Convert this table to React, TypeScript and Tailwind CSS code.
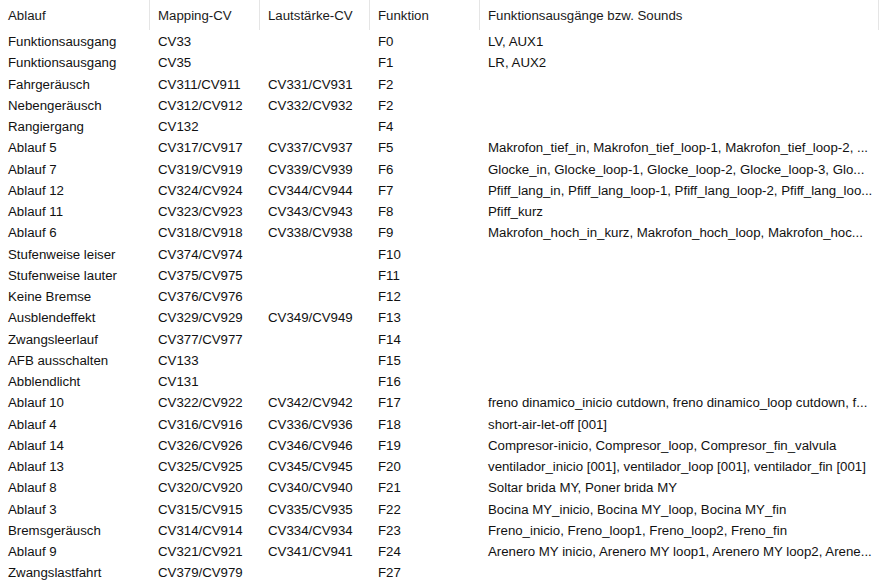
import React from "react";

const rows: [string, string, string, string, string][] = [
  ["Funktionsausgang", "CV33", "", "F0", "LV, AUX1"],
  ["Funktionsausgang", "CV35", "", "F1", "LR, AUX2"],
  ["Fahrgeräusch", "CV311/CV911", "CV331/CV931", "F2", ""],
  ["Nebengeräusch", "CV312/CV912", "CV332/CV932", "F2", ""],
  ["Rangiergang", "CV132", "", "F4", ""],
  ["Ablauf 5", "CV317/CV917", "CV337/CV937", "F5", "Makrofon_tief_in, Makrofon_tief_loop-1, Makrofon_tief_loop-2, ..."],
  ["Ablauf 7", "CV319/CV919", "CV339/CV939", "F6", "Glocke_in, Glocke_loop-1, Glocke_loop-2, Glocke_loop-3, Glo..."],
  ["Ablauf 12", "CV324/CV924", "CV344/CV944", "F7", "Pfiff_lang_in, Pfiff_lang_loop-1, Pfiff_lang_loop-2, Pfiff_lang_loo..."],
  ["Ablauf 11", "CV323/CV923", "CV343/CV943", "F8", "Pfiff_kurz"],
  ["Ablauf 6", "CV318/CV918", "CV338/CV938", "F9", "Makrofon_hoch_in_kurz, Makrofon_hoch_loop, Makrofon_hoc..."],
  ["Stufenweise leiser", "CV374/CV974", "", "F10", ""],
  ["Stufenweise lauter", "CV375/CV975", "", "F11", ""],
  ["Keine Bremse", "CV376/CV976", "", "F12", ""],
  ["Ausblendeffekt", "CV329/CV929", "CV349/CV949", "F13", ""],
  ["Zwangsleerlauf", "CV377/CV977", "", "F14", ""],
  ["AFB ausschalten", "CV133", "", "F15", ""],
  ["Abblendlicht", "CV131", "", "F16", ""],
  ["Ablauf 10", "CV322/CV922", "CV342/CV942", "F17", "freno dinamico_inicio cutdown, freno dinamico_loop cutdown, f..."],
  ["Ablauf 4", "CV316/CV916", "CV336/CV936", "F18", "short-air-let-off [001]"],
  ["Ablauf 14", "CV326/CV926", "CV346/CV946", "F19", "Compresor-inicio, Compresor_loop, Compresor_fin_valvula"],
  ["Ablauf 13", "CV325/CV925", "CV345/CV945", "F20", "ventilador_inicio [001], ventilador_loop [001], ventilador_fin [001]"],
  ["Ablauf 8", "CV320/CV920", "CV340/CV940", "F21", "Soltar brida MY, Poner brida MY"],
  ["Ablauf 3", "CV315/CV915", "CV335/CV935", "F22", "Bocina MY_inicio, Bocina MY_loop, Bocina MY_fin"],
  ["Bremsgeräusch", "CV314/CV914", "CV334/CV934", "F23", "Freno_inicio, Freno_loop1, Freno_loop2, Freno_fin"],
  ["Ablauf 9", "CV321/CV921", "CV341/CV941", "F24", "Arenero MY inicio, Arenero MY loop1, Arenero MY loop2, Arene..."],
  ["Zwangslastfahrt", "CV379/CV979", "", "F27", ""],
];

const widths = ["w-[150px]", "w-[110px]", "w-[110px]", "w-[110px]", "w-[399px]"];
const headers = ["Ablauf", "Mapping-CV", "Lautstärke-CV", "Funktion", "Funktionsausgänge bzw. Sounds"];

export default function App() {
  return (
    <div
      className="w-[887px] h-[585px] bg-white overflow-hidden text-[13.25px] text-[#111]"
      style={{ fontFamily: '"Liberation Sans", Arial, sans-serif' }}
    >
      <div className="flex h-[31.5px]">
        {headers.map((h, i) => (
          <div key={i} className={`${widths[i]} shrink-0 h-full flex items-center`}>
            <div className="flex-1 pl-2 whitespace-nowrap overflow-hidden text-[#1a1a1a]">{h}</div>
            <div className="w-px h-[30px] self-start bg-[#e5e5e5]" />
          </div>
        ))}
      </div>
      <div className="flex flex-col">
        {rows.map((r, ri) => (
          <div key={ri} className="flex h-[21.25px] items-center">
            {r.map((c, ci) => (
              <div
                key={ci}
                className={`${widths[ci]} shrink-0 pl-2 whitespace-nowrap overflow-hidden`}
              >
                {c}
              </div>
            ))}
          </div>
        ))}
      </div>
    </div>
  );
}
